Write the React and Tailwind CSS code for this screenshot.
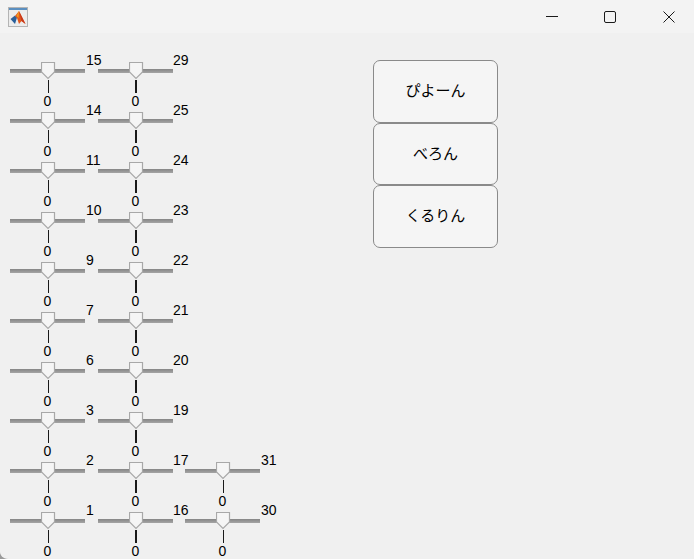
const rows = [
  [15, 29],
  [14, 25],
  [11, 24],
  [10, 23],
  [9, 22],
  [7, 21],
  [6, 20],
  [3, 19],
  [2, 17, 31],
  [1, 16, 30],
]

function Thumb() {
  return (
    <svg width="15" height="18" viewBox="0 0 15 18" className="absolute left-[31px] top-0">
      <path d="M0.5 0.5H13.5V10L7 16.5L0.5 10Z" fill="#f5f5f5" stroke="#a8a8a8" strokeWidth="1.2" />
    </svg>
  )
}

function Slider({ label, thick, width }) {
  return (
    <div className={`flex items-start shrink-0 ${width}`}>
      <div className="flex flex-col w-[75px] shrink-0 pt-[10px]">
        <div className="relative h-[17px] flex items-center">
          <div className="w-full h-[4px] mt-[1px] bg-gradient-to-b from-[#858585] to-[#a5a5a5]" />
          <Thumb />
        </div>
        <div className={`h-[13px] mt-[1px] bg-[#1a1a1a] ${thick ? "w-[2px] ml-[37px]" : "w-px ml-[38px]"}`} />
        <div className="h-[16px] text-center text-[14px] leading-[16px]">0</div>
      </div>
      <div className={`text-[14px] leading-[16px] whitespace-nowrap ${thick ? "" : "ml-px"}`}>{label}</div>
    </div>
  )
}

function MatlabIcon() {
  return (
    <svg width="20" height="20" viewBox="0 0 20 20">
      <rect x="0.5" y="0.5" width="19" height="19" fill="#ececec" stroke="#b4b4b4" />
      <rect x="1" y="1" width="18" height="2" fill="#5b8fc0" />
      <path d="M2.5 12L7 8.5L9 10.5L7 17Z" fill="#2a5f9a" />
      <path d="M7 9L11 4L14 10L17.5 17L13.5 14L11 17L9 11Z" fill="#e2591d" />
      <path d="M11 4L14 10L17.5 17L13.5 14Z" fill="#c8371a" />
      <path d="M8.5 9L11 4L10.5 11Z" fill="#f0a020" />
    </svg>
  )
}

export default function App() {
  return (
    <div className="relative w-[694px] h-[559px] overflow-hidden bg-[#f0f0f0] text-black font-['Liberation_Sans','Noto_Sans_CJK_JP',sans-serif]">
      <div className="h-[33px] bg-[#f3f3f3] flex items-center justify-between pl-[8px]">
        <MatlabIcon />
        <div className="flex items-center">
          <button className="w-[58px] h-[29px] flex items-center justify-center">
            <svg width="12" height="12" viewBox="0 0 12 12">
              <path d="M0 5.5H12" stroke="#1a1a1a" />
            </svg>
          </button>
          <button className="w-[58px] h-[29px] flex items-center justify-center">
            <svg width="12" height="12" viewBox="0 0 12 12">
              <rect x="0.5" y="0.5" width="11" height="11" rx="1.5" fill="none" stroke="#1a1a1a" />
            </svg>
          </button>
          <button className="w-[50px] ml-[5px] h-[29px] flex items-center justify-center">
            <svg width="12" height="12" viewBox="0 0 12 12">
              <path d="M0.5 0.5L11.5 11.5M11.5 0.5L0.5 11.5" stroke="#1a1a1a" />
            </svg>
          </button>
        </div>
      </div>
      <div className="flex items-start pl-[10px] pt-[19px]">
        <div className="flex flex-col w-[363px] shrink-0">
          {rows.map((row) => (
            <div key={row[0]} className="flex h-[50px]">
              {row.map((n, i) => (
                <Slider key={n} label={n} thick={i === 1} width={i === 0 ? "w-[88px]" : "w-[87px]"} />
              ))}
            </div>
          ))}
        </div>
        <div className="flex flex-col w-[125px] mt-[8px] text-[15px]">
          <button className="h-[63px] rounded-[7px] border border-[#8a8a8a] bg-[#f5f5f5]">ぴよーん</button>
          <button className="h-[62px] rounded-[7px] border border-[#8a8a8a] bg-[#f5f5f5]">べろん</button>
          <button className="h-[63px] rounded-[7px] border border-[#8a8a8a] bg-[#f5f5f5]">くるりん</button>
        </div>
      </div>
      {/* window corner */}
      <svg width="8" height="7" viewBox="0 0 8 7" className="absolute left-0 bottom-0">
        <path d="M0 0C0 3 3 7 8 7H0Z" fill="#9a9a9a" />
      </svg>
    </div>
  )
}
